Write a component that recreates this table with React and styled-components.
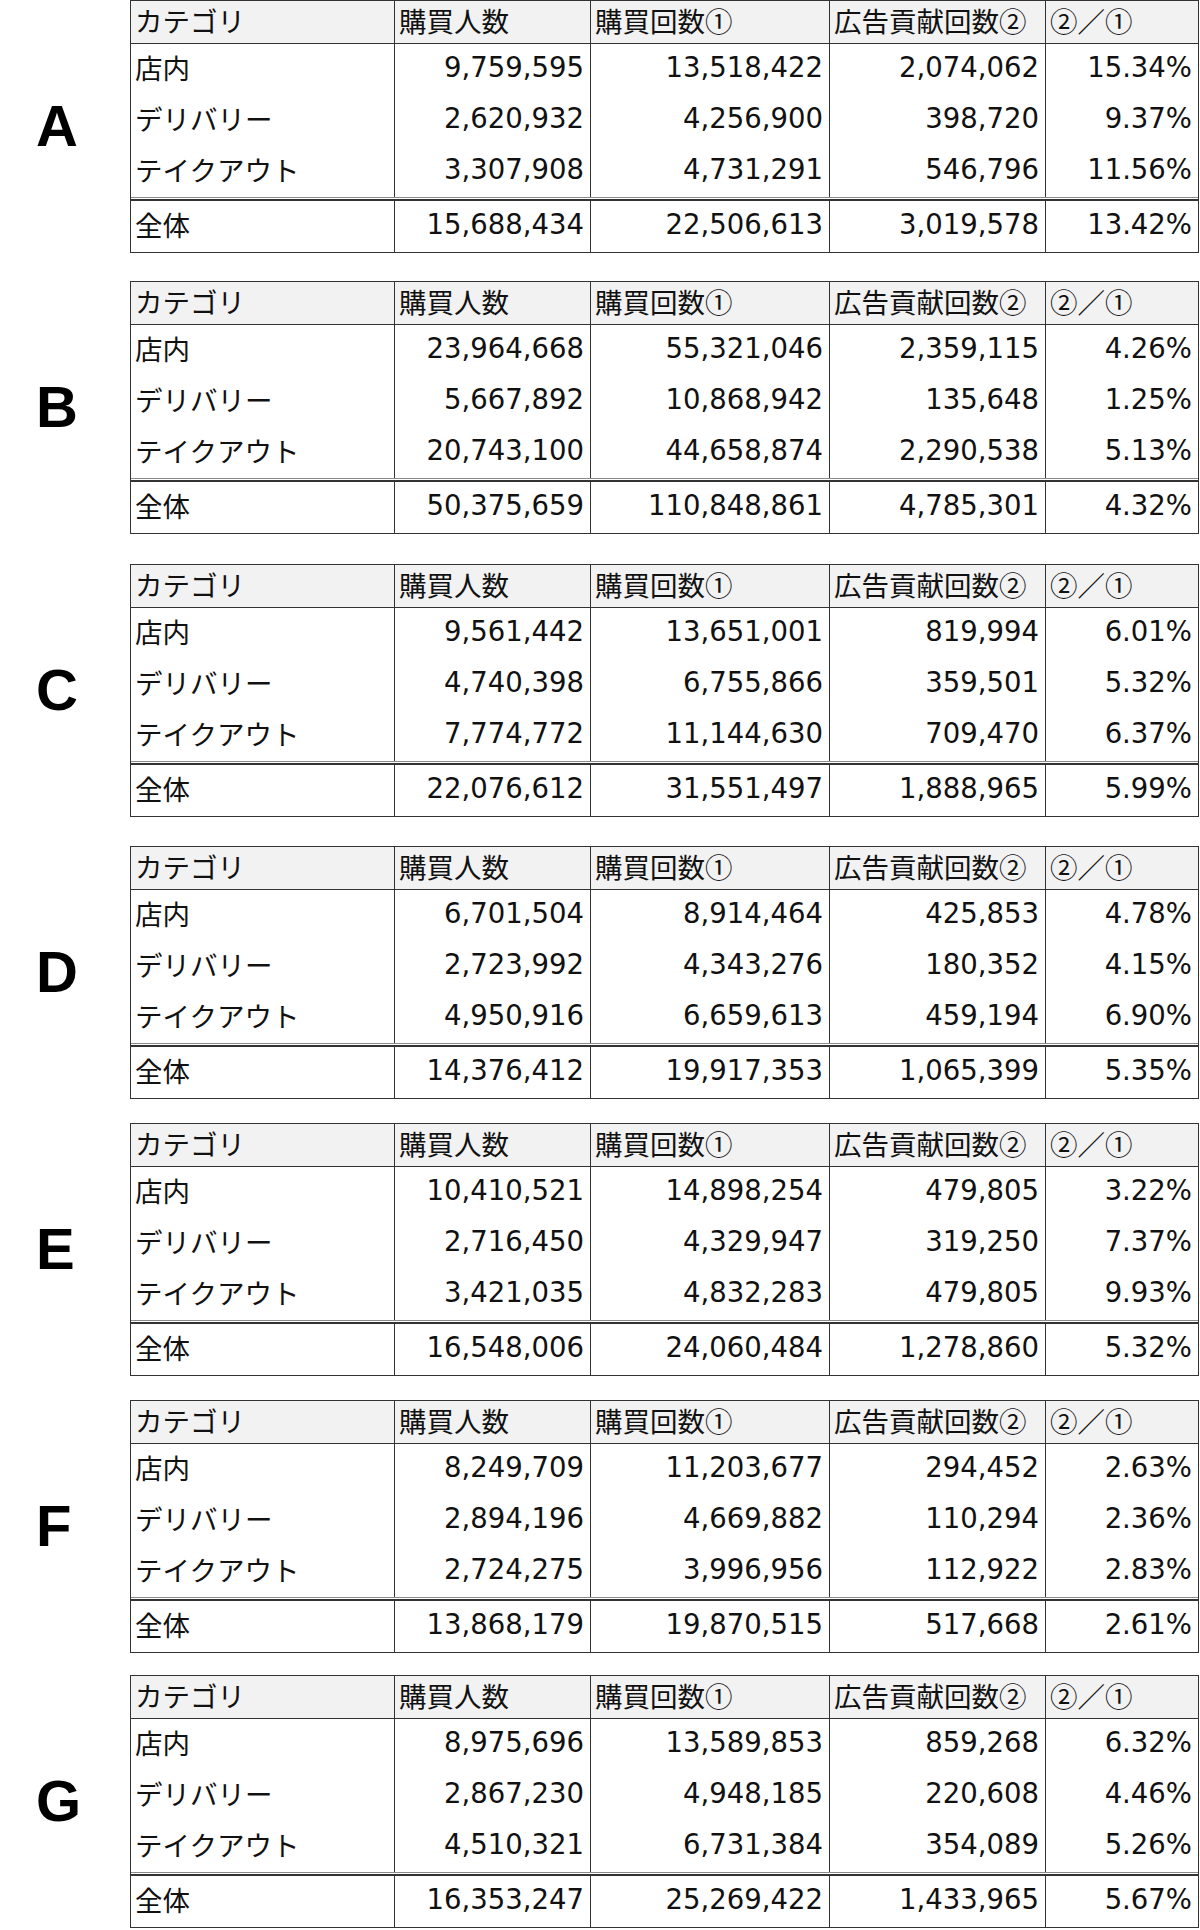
import React from "react";
import styled, { createGlobalStyle } from "styled-components";

const GlobalStyle = createGlobalStyle`
  html, body {
    margin: 0;
    padding: 0;
    background: #fff;
  }
  #root {
    width: 1200px;
    height: 1930px;
  }
`;

const headers = ["カテゴリ", "購買人数", "購買回数①", "広告貢献回数②", "②／①"];

const sections = [
  {
    letter: "A",
    gap: 0,
    rows: [
      ["店内", "9,759,595", "13,518,422", "2,074,062", "15.34%"],
      ["デリバリー", "2,620,932", "4,256,900", "398,720", "9.37%"],
      ["テイクアウト", "3,307,908", "4,731,291", "546,796", "11.56%"],
    ],
    total: ["全体", "15,688,434", "22,506,613", "3,019,578", "13.42%"],
  },
  {
    letter: "B",
    gap: 28,
    rows: [
      ["店内", "23,964,668", "55,321,046", "2,359,115", "4.26%"],
      ["デリバリー", "5,667,892", "10,868,942", "135,648", "1.25%"],
      ["テイクアウト", "20,743,100", "44,658,874", "2,290,538", "5.13%"],
    ],
    total: ["全体", "50,375,659", "110,848,861", "4,785,301", "4.32%"],
  },
  {
    letter: "C",
    gap: 30,
    rows: [
      ["店内", "9,561,442", "13,651,001", "819,994", "6.01%"],
      ["デリバリー", "4,740,398", "6,755,866", "359,501", "5.32%"],
      ["テイクアウト", "7,774,772", "11,144,630", "709,470", "6.37%"],
    ],
    total: ["全体", "22,076,612", "31,551,497", "1,888,965", "5.99%"],
  },
  {
    letter: "D",
    gap: 29,
    rows: [
      ["店内", "6,701,504", "8,914,464", "425,853", "4.78%"],
      ["デリバリー", "2,723,992", "4,343,276", "180,352", "4.15%"],
      ["テイクアウト", "4,950,916", "6,659,613", "459,194", "6.90%"],
    ],
    total: ["全体", "14,376,412", "19,917,353", "1,065,399", "5.35%"],
  },
  {
    letter: "E",
    gap: 24,
    rows: [
      ["店内", "10,410,521", "14,898,254", "479,805", "3.22%"],
      ["デリバリー", "2,716,450", "4,329,947", "319,250", "7.37%"],
      ["テイクアウト", "3,421,035", "4,832,283", "479,805", "9.93%"],
    ],
    total: ["全体", "16,548,006", "24,060,484", "1,278,860", "5.32%"],
  },
  {
    letter: "F",
    gap: 24,
    rows: [
      ["店内", "8,249,709", "11,203,677", "294,452", "2.63%"],
      ["デリバリー", "2,894,196", "4,669,882", "110,294", "2.36%"],
      ["テイクアウト", "2,724,275", "3,996,956", "112,922", "2.83%"],
    ],
    total: ["全体", "13,868,179", "19,870,515", "517,668", "2.61%"],
  },
  {
    letter: "G",
    gap: 22,
    rows: [
      ["店内", "8,975,696", "13,589,853", "859,268", "6.32%"],
      ["デリバリー", "2,867,230", "4,948,185", "220,608", "4.46%"],
      ["テイクアウト", "4,510,321", "6,731,384", "354,089", "5.26%"],
    ],
    total: ["全体", "16,353,247", "25,269,422", "1,433,965", "5.67%"],
  },
];

export default function App() {
  return (
    <>
      <GlobalStyle />
      <Page>
        {sections.map((section) => (
          <Section key={section.letter} $gap={section.gap}>
            <Letter>{section.letter}</Letter>
            <Table>
              <Row $kind="head">
                {headers.map((text) => (
                  <Cell key={text} $label>
                    {text}
                  </Cell>
                ))}
              </Row>
              {section.rows.map((row) => (
                <Row key={row[0]} $kind="body">
                  {row.map((value, i) => (
                    <Cell key={i} $label={i === 0}>
                      {value}
                    </Cell>
                  ))}
                </Row>
              ))}
              <DoubleRule />
              <Row $kind="total">
                {section.total.map((value, i) => (
                  <Cell key={i} $label={i === 0}>
                    {value}
                  </Cell>
                ))}
              </Row>
            </Table>
          </Section>
        ))}
      </Page>
    </>
  );
}

const Page = styled.div`
  width: 1200px;
  display: flex;
  flex-direction: column;
`;

const Section = styled.section`
  display: flex;
  align-items: center;
  margin-top: ${(p) => p.$gap}px;
`;

const Letter = styled.div`
  width: 130px;
  box-sizing: border-box;
  padding-left: 36px;
  padding-bottom: 2px;
  font-family: "Liberation Sans", Arial, sans-serif;
  font-weight: 700;
  font-size: 58px;
  line-height: 1;
  color: #000;
`;

const Table = styled.div`
  width: 1069px;
  box-sizing: border-box;
  border: 1px solid #333;
  display: flex;
  flex-direction: column;
`;

const rowHeights = { head: 43, body: 51, total: 51 };

const Row = styled.div`
  display: grid;
  grid-template-columns: 264px 196px 239px 216px 1fr;
  height: ${(p) => rowHeights[p.$kind]}px;
  box-sizing: border-box;
  background: ${(p) => (p.$kind === "head" ? "#f2f2f2" : "#fff")};
  border-bottom: ${(p) => (p.$kind === "head" ? "1px solid #333" : "none")};
`;

const Cell = styled.div`
  display: flex;
  align-items: center;
  justify-content: ${(p) => (p.$label ? "flex-start" : "flex-end")};
  box-sizing: border-box;
  padding: 0 6px 3px 4px;
  border-right: 1px solid #333;
  font-family: ${(p) =>
    p.$label
      ? '"Noto Sans CJK JP", sans-serif'
      : '"DejaVu Sans", "Noto Sans CJK JP", sans-serif'};
  font-size: 27.5px;
  line-height: 1;
  color: #111;
  white-space: nowrap;

  &:last-child {
    border-right: none;
  }
`;

const DoubleRule = styled.div`
  height: 4px;
  box-sizing: border-box;
  border-top: 1px solid #8a8a8a;
  border-bottom: 2px solid #333;
`;
